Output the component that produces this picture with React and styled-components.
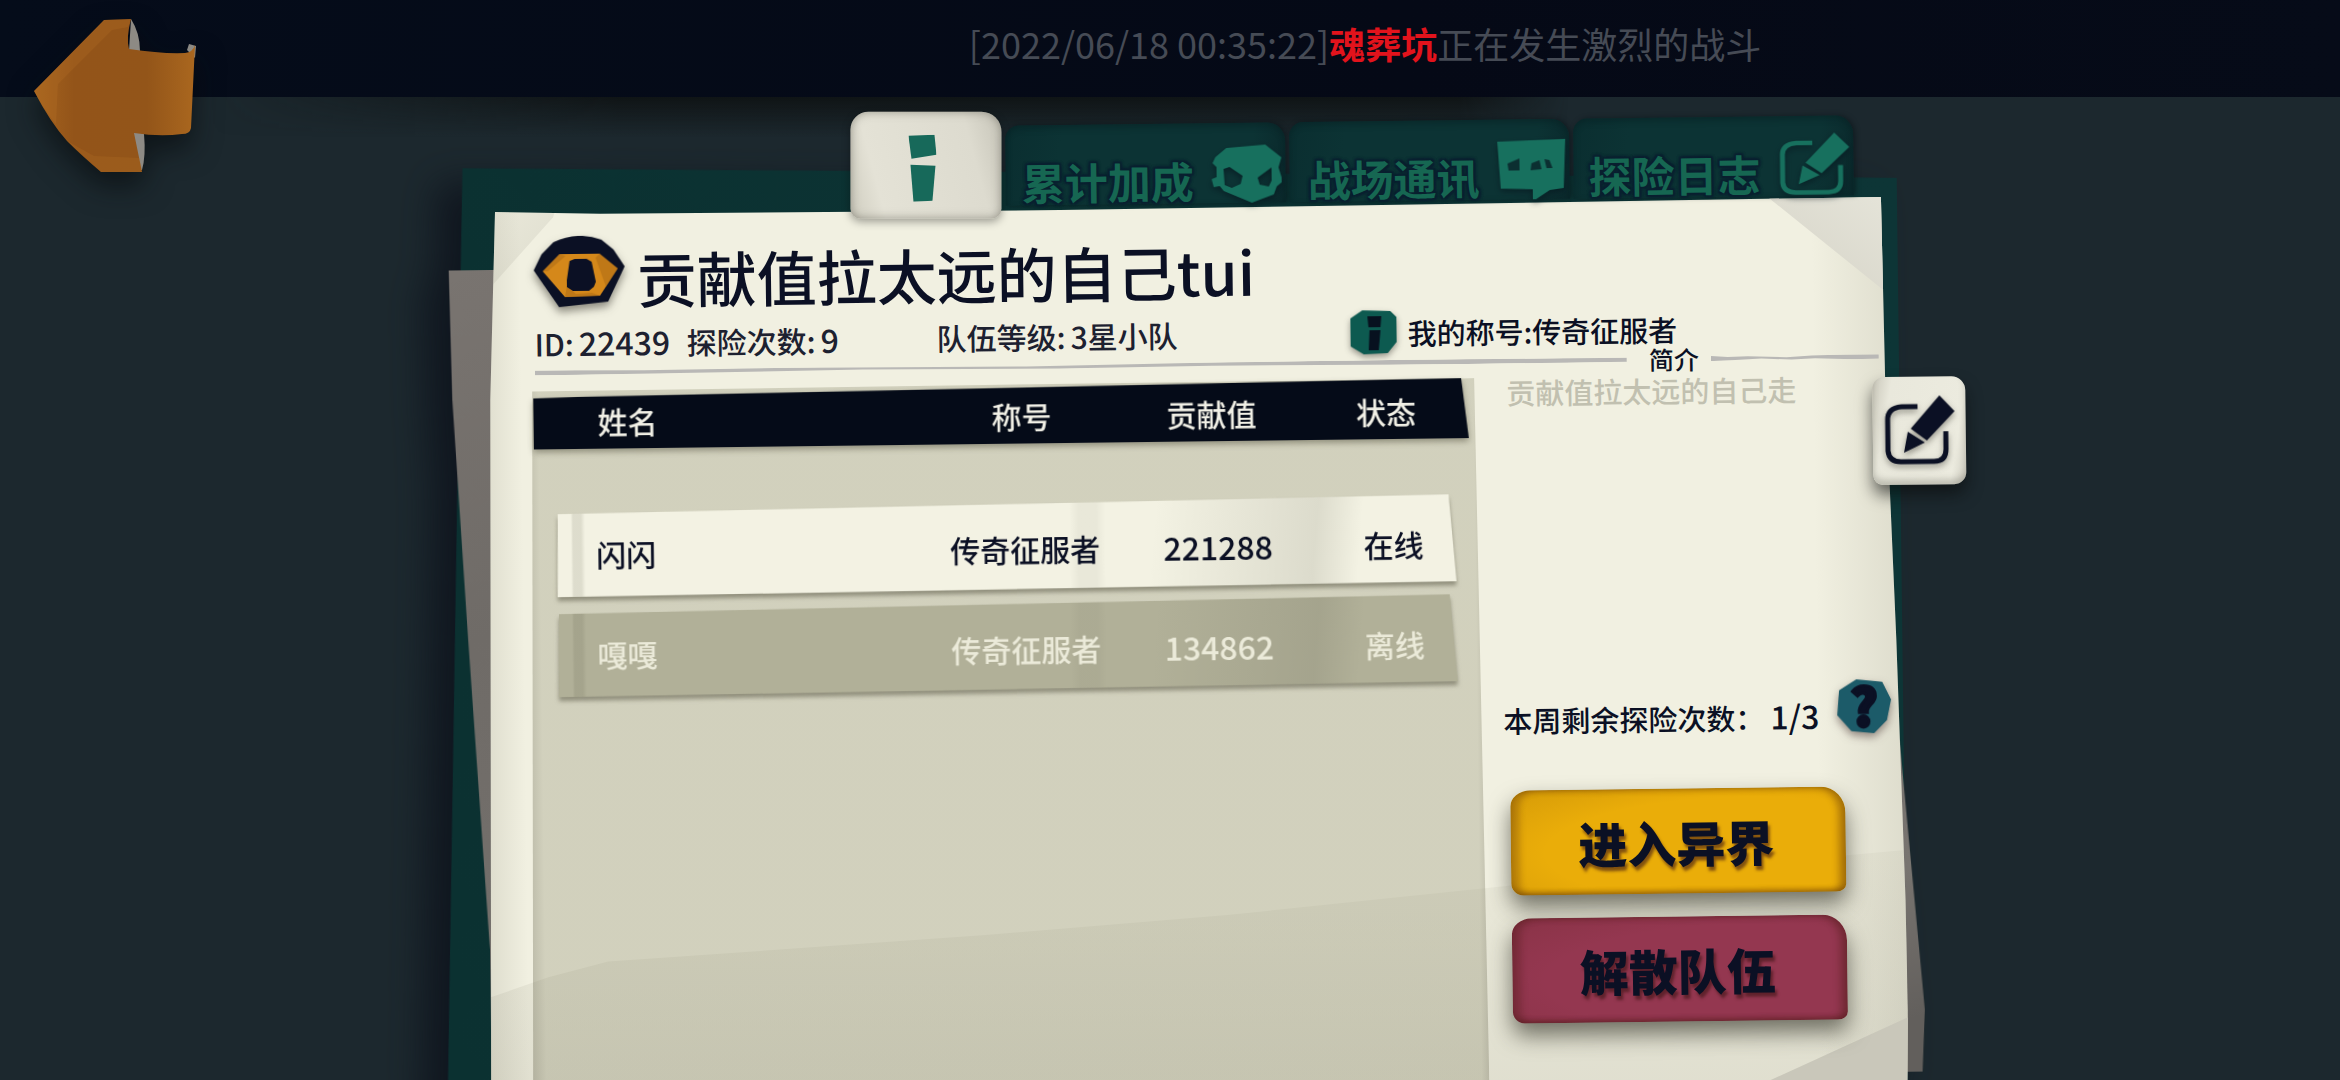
import React from "react";
import styled, { createGlobalStyle, css } from "styled-components";

const INK = "#0b1024";
const PAPER = "#f1f0e1";
const TEAL = "#0c3334";
const MINT = "#17705e";

const GlobalStyle = createGlobalStyle`
  *, *::before, *::after { box-sizing: border-box; }
  body {
    margin: 0;
    background: #1c282e;
    color: ${INK};
    font-family: "Noto Sans CJK SC", "Noto Sans", sans-serif;
    font-weight: 500;
  }
  button {
    font: inherit;
    color: inherit;
    border: 0;
    padding: 0;
    background: none;
    cursor: pointer;
  }
`;

const Screen = styled.div`
  height: 100vh;
  overflow: hidden;
  display: flex;
  flex-direction: column;
  background: #1c282e;
`;

const TopBar = styled.header`
  position: relative;
  flex: none;
  display: flex;
  align-items: center;
  height: 97px;
  background: linear-gradient(90deg, #050c1a, #050916 60%, #060b18);
  &::after {
    content: "";
    position: absolute;
    top: 100%;
    left: 9%;
    right: 33%;
    height: 40px;
    background: linear-gradient(rgba(12, 14, 14, 0.75), rgba(12, 14, 14, 0));
    mask-image: linear-gradient(90deg, transparent, #000 30%, #000 92%, transparent);
  }
`;

const BackButton = styled.button`
  position: absolute;
  z-index: 2;
  top: 18px;
  left: 34px;
  width: 163px;
  height: 155px;
  filter: drop-shadow(0 14px 14px rgba(5, 8, 10, 0.6));
  svg { display: block; }
`;

const Ticker = styled.p`
  flex: 1;
  margin: 0;
  padding: 0 0 12px 390px;
  text-align: center;
  font-size: 36px;
  font-weight: 400;
  line-height: 48px;
  color: #464b55;
  white-space: nowrap;
`;

const Place = styled.strong`
  font-weight: 700;
  color: #e2131c;
`;

const Stage = styled.main`
  flex: 1;
  display: flex;
  padding: 20px 463px 0 491px;
`;

const Board = styled.div`
  flex: 1;
  min-width: 0;
  display: flex;
  flex-direction: column;
  transform: rotate(-0.7deg);
  transform-origin: 0 95px;
`;

const TabBar = styled.nav`
  position: relative;
  z-index: 2;
  flex: none;
  display: flex;
  align-items: flex-end;
  gap: 4px;
  height: 95px;
  padding-left: 360px;
`;

const InfoTab = styled.button`
  display: grid;
  place-items: center;
  width: 151px;
  height: 107px;
  margin-bottom: -12px;
  padding: 6px 8px 0 0;
  border-radius: 18px 20px 10px 10px;
  background: linear-gradient(75deg, #d3d1c4 4%, #e4e2d6 20%, #dddbcf 78%, #c6c4b8);
  box-shadow: inset 0 0 10px rgba(90, 88, 78, 0.55), 0 3px 8px rgba(0, 0, 0, 0.35);
  transform: rotate(0.7deg);
`;

const Tab = styled.button`
  display: flex;
  justify-content: flex-end;
  align-items: flex-end;
  gap: 18px;
  width: 280px;
  height: 80px;
  padding-right: 4px;
  border-radius: 14px 18px 0 0;
  background: linear-gradient(100deg, #0a2e30, ${TEAL} 20%, ${TEAL} 85%, #0a282b);
  box-shadow: inset 0 3px 6px rgba(6, 26, 28, 0.4), 2px 0 5px rgba(5, 16, 20, 0.5);
  color: #166752;
  font-size: 43px;
  font-weight: 700;
  line-height: 48px;
  text-shadow: 0 0 4px #0a2030, 2px 2px 2px #0a2030, -2px -2px 2px #0a2030, 2px -2px 2px #0a2030, -2px 2px 2px #0a2030;
  white-space: nowrap;
  svg { flex: none; filter: drop-shadow(0 3px 3px rgba(5, 20, 28, 0.6)); }
`;

const Sheet = styled.section`
  position: relative;
  flex: 1 0 920px;
  isolation: isolate;
`;

const Backing = styled.div`
  position: absolute;
  inset: 0;
  z-index: -1;
  filter: drop-shadow(-26px 14px 18px rgba(10, 14, 24, 0.7));
  &::before {
    content: "";
    position: absolute;
    inset: -44px -20px 0 -60px;
    background: linear-gradient(90deg, #0b3131, #0d3536);
    clip-path: polygon(32px 0, 100% 27px, 100% 100%, 5px 100%, 29px 102px);
  }
  &::after {
    content: "";
    position: absolute;
    inset: 58px -40px 0 -44px;
    background: linear-gradient(165deg, #797470, #6f6b67 30%, #787470 80%, #625f5c 92%);
    clip-path: polygon(1px 0, 60px 0, calc(100% - 24px) 487px, calc(100% - 2px) 757px, calc(100% - 5px) 819px, 34px 819px, 34px 680px, 16px 370px, 3px 129px);
  }
`;

const Paper = styled.div`
  position: absolute;
  inset: 0 -24px 0 -12px;
  z-index: -1;
  background:
    linear-gradient(90deg, rgba(150, 148, 130, 0.22), transparent 40px),
    linear-gradient(90deg, transparent calc(100% - 90px), rgba(150, 148, 130, 0.22)),
    ${PAPER};
  clip-path: polygon(16px 0, 121px 3px, 581px 5px, calc(100% - 20px) 2px, calc(100% - 18px) 185px, calc(100% - 10px) 445px, calc(100% - 4px) 705px, calc(100% - 3px) 815px, calc(100% - 5px) 100%, 1px 100%, 9px 188px);
`;

const Crease = styled.div`
  position: absolute;
  inset: 0;
  ${({ $place }) =>
    ({
      topLeft: css`
        background: linear-gradient(135deg, rgba(180, 178, 165, 0.1), rgba(150, 148, 135, 0.2) 90px);
        clip-path: polygon(0 0, 76px 0, 74px 6px, 10px 76px, 0 86px);
      `,
      topRight: css`
        background: linear-gradient(215deg, #e6e5da, #d5d3c7 150px);
        clip-path: polygon(calc(100% - 134px) 0, 100% 0, 100% 96px, calc(100% - 20px) 94px);
      `,
      middle: css`
        background: linear-gradient(rgba(110, 108, 80, 0.05) 660px, rgba(110, 108, 90, 0.14));
        clip-path: polygon(0 786px, 60px 766px, 120px 751px, 35% 729px, 52% 712px, 72% 686px, 100% 655px, 100% 100%, 0 100%);
      `,
      bottomRight: css`
        background: #c9c7ba;
        clip-path: polygon(calc(100% - 2px) 822px, 100% 100%, calc(100% - 200px) 100%, calc(100% - 142px) 884px);
      `,
    })[$place]}
`;

const TitleRow = styled.div`
  display: flex;
  align-items: flex-start;
  gap: 12px;
  padding: 25px 0 0 42px;
  > svg { flex: none; filter: drop-shadow(0 5px 4px rgba(40, 38, 30, 0.5)); }
`;

const TeamName = styled.h1`
  margin: 0;
  font-size: 60px;
  font-weight: 500;
  line-height: 84px;
  white-space: nowrap;
`;

const Facts = styled.div`
  display: grid;
  grid-template-columns: 152px 250px 414px auto;
  align-items: center;
  height: 36px;
  padding-left: 42px;
  font-size: 30px;
  line-height: 36px;
  white-space: nowrap;
`;

const Fact = styled.span`
  display: flex;
  align-items: baseline;
  gap: 5px;
  color: #1d2130;
`;

const Num = styled.span`
  font-size: 32px;
`;

const MyTitle = styled.span`
  display: flex;
  align-items: center;
  gap: 11px;
  font-size: 29px;
  svg { flex: none; filter: drop-shadow(0 3px 3px rgba(40, 38, 30, 0.45)); }
`;

const Divider = styled.div`
  display: flex;
  align-items: center;
  height: 33px;
  padding-left: 42px;
`;

const Rule = styled.span`
  flex: ${({ $short }) => ($short ? "0 0 168px" : "1")};
  height: 5px;
  background: #b9b8b6;
  clip-path: polygon(0 0, 10% 20%, 22% 10%, 45% 40%, 60% 10%, 80% 0, 100% 10%, 100% 90%, 85% 100%, 62% 70%, 48% 90%, 30% 60%, 12% 90%, 0 100%);
`;

const DividerLabel = styled.span`
  padding: 0 12px 0 22px;
  font-size: 25px;
  line-height: 25px;
`;

const Body = styled.div`
  display: flex;
  height: calc(100% - 178px);
  padding-left: 31px;
`;

const Roster = styled.div`
  position: relative;
  flex: 1;
  min-width: 0;
  &::before {
    content: "";
    position: absolute;
    inset: 0;
    background: linear-gradient(90deg, rgba(110, 108, 85, 0.4), rgba(137, 136, 106, 0.3) 14px, rgba(137, 136, 106, 0.3) calc(100% - 8px), rgba(110, 108, 85, 0.36));
    clip-path: polygon(8px 2px, calc(100% - 7px) 0, 100% 100%, 0 100%);
  }
`;

const Table = styled.table`
  position: relative;
  display: block;
  padding: 0 13px 0 9px;
  font-size: 30px;
  line-height: 36px;
  white-space: nowrap;
`;

const rowGrid = css`
  position: relative;
  display: grid;
  grid-template-columns: 1fr 160px 226px 125px;
  align-items: center;
  isolation: isolate;
  &::before {
    content: "";
    position: absolute;
    inset: 0;
    z-index: -1;
  }
`;

const Head = styled.thead`
  display: block;
`;

const HeadRow = styled.tr`
  ${rowGrid}
  grid-template-columns: 1fr 160px 220px 129px;
  height: 60px;
  padding: 4px 18px 0 64px;
  color: #f1f0e6;
  filter: drop-shadow(0 3px 3px rgba(60, 58, 40, 0.45));
  &::before {
    background: #050b18;
    clip-path: polygon(0 9px, 45px 8px, calc(100% - 7px) 0, 100% 100%, 0 100%);
  }
`;

const Members = styled.tbody`
  display: grid;
  gap: 8px;
  padding: 56px 14px 0 22px;
`;

const MemberRow = styled.tr`
  ${rowGrid}
  height: 92px;
  padding: 6px 0 0 39px;
  color: ${({ $online }) => ($online ? INK : "#ebead9")};
  filter: drop-shadow(0 4px 2px rgba(80, 78, 60, 0.5));
  &::before {
    background:
      linear-gradient(90deg, transparent 14px, rgba(90, 90, 70, 0.14) 16px, rgba(90, 90, 70, 0.14) 24px, transparent 28px),
      linear-gradient(95deg, transparent 66%, rgba(100, 100, 85, 0.16) 84%, transparent 89%),
      linear-gradient(90deg, transparent 57%, rgba(100, 100, 85, 0.07) 58%, rgba(100, 100, 85, 0.07) 60%, transparent 61%),
      ${({ $online }) => ($online ? "#f3f2e3" : "#b1b098")};
    clip-path: polygon(1px 9px, calc(100% - 7px) 0, 100% calc(100% - 5px), 0 100%);
  }
`;

const Th = styled.th`
  padding: 0;
  font-weight: 500;
  text-align: ${({ $left }) => ($left ? "left" : "center")};
`;

const Td = styled.td`
  padding: 0;
  font-size: ${({ $num }) => ($num ? "32px" : "30px")};
  text-align: ${({ $left }) => ($left ? "left" : "center")};
`;

const Side = styled.aside`
  flex: 0 0 398px;
  padding-left: 18px;
`;

const Intro = styled.p`
  margin: 0;
  height: 306px;
  padding-left: 7px;
  font-size: 29px;
  line-height: 28px;
  color: #c1c0b0;
`;

const Quota = styled.div`
  display: flex;
  justify-content: space-between;
  align-items: flex-end;
  height: 54px;
  margin-right: -8px;
`;

const QuotaText = styled.p`
  display: flex;
  align-items: baseline;
  gap: 6px;
  margin: 0;
  font-size: 29px;
  line-height: 36px;
  white-space: nowrap;
`;

const HelpButton = styled.button`
  width: 54px;
  height: 54px;
  filter: drop-shadow(0 4px 4px rgba(60, 40, 40, 0.5));
  span {
    display: block;
    height: 54px;
    background: #1c5b69;
    clip-path: polygon(4% 20%, 36% 0, 84% 5%, 100% 38%, 92% 76%, 68% 100%, 26% 96%, 0 66%);
    font-size: 52px;
    font-weight: 900;
    line-height: 50px;
    text-align: center;
    -webkit-text-stroke: 3px ${INK};
  }
`;

const Actions = styled.div`
  display: grid;
  gap: 23px;
  padding: 53px 39px 0 6px;
`;

const ActionButton = styled.button`
  height: 105px;
  padding-right: 4px;
  border-radius: 20px 24px 10px 12px / 16px 26px 8px 12px;
  background:
    radial-gradient(ellipse at 70% 60%, transparent 60%, rgba(60, 20, 0, 0.12)),
    ${({ $tone }) => ($tone === "gold" ? "#eaad09" : "#943750")};
  box-shadow:
    inset 9px 0 6px rgba(60, 20, 10, 0.25),
    inset -7px 0 7px rgba(60, 20, 10, 0.35),
    inset 0 -3px 5px rgba(60, 20, 10, 0.2),
    0 12px 22px rgba(50, 50, 40, 0.65);
  font-size: 49px;
  font-weight: 900;
  line-height: 60px;
  text-shadow: 2px 4px 3px rgba(60, 20, 20, 0.6);
`;

const EditButton = styled.button`
  position: absolute;
  top: 182px;
  right: -86px;
  display: grid;
  place-items: center;
  width: 93px;
  height: 108px;
  border-radius: 12px 14px 12px 10px;
  background: linear-gradient(100deg, #c9c7ba, #e9e8dc 18%, #ecebdf 85%, #cfcdc1);
  box-shadow: inset 0 -5px 6px rgba(90, 88, 78, 0.3), 0 10px 16px rgba(10, 12, 12, 0.6);
  svg { filter: drop-shadow(0 3px 3px rgba(60, 58, 50, 0.5)); }
`;

const BackIcon = () => (
  <svg width="163" height="155" viewBox="0 0 163 155" aria-hidden="true">
    <defs>
      <linearGradient id="arrow" x1="0" x2="1">
        <stop offset="0" stopColor="#a5631e" />
        <stop offset="0.25" stopColor="#935419" />
        <stop offset="0.7" stopColor="#935519" />
        <stop offset="1" stopColor="#aa671f" />
      </linearGradient>
    </defs>
    <path d="M97 1q9 14 9 32H95zM99 112l11 4q2 22-2 36H98zM153 32l2-6 7 2-1 12z" fill="#8d8a84" />
    <path d="M0 73 70 2 97 1Q92 20 95 31 128 36 151 35 159 34 161 27L157 110Q156 116 148 116 126 119 100 115L108 154H67Q48 138 33 123 16 104 0 73z" fill="url(#arrow)" />
    <path d="M0 73 70 2 97 1 94 9 78 12 24 66 22 106Q9 90 0 73z" fill="#c07828" opacity=".22" />
    <path d="M67 154 33 123 60 138 106 140 108 154z" fill="#c07828" opacity=".2" />
  </svg>
);

const InfoMark = () => (
  <svg width="28" height="67" viewBox="0 0 28 67" fill="#17695a" aria-hidden="true">
    <polygon points="0,1 26,0 28,20 3,24" />
    <polygon points="2,30 27,31 24,66 5,67" />
  </svg>
);

const MaskIcon = () => (
  <svg width="70" height="58" viewBox="0 0 70 58" aria-hidden="true">
    <path fill={MINT} fillRule="evenodd" d="M1 18 4 12 15 3 54 0 70 13 67 23 70 33 70 38 65 42 62 50 40 58 12 46 8 41 2 42 0 34 5 32 5 22zM12 24 18 22 31 31 29 39 20 43 13 40zM60 23 46 33 48 40 57 42 60 36z" />
  </svg>
);

const ChatIcon = () => (
  <svg width="68" height="60" viewBox="0 0 68 60" aria-hidden="true">
    <path fill={MINT} d="M0 2 68 0 66 49 52 51 35 62 35 50 3 49z" />
    <path fill="#0b2f31" d="M10 24 22 19 22 31 11 31zM34 24 42 21 44 30 33 31zM47 20 52 21 55 29 49 29z" />
  </svg>
);

const EditIcon = ({ color, height = 70 }) => (
  <svg width="71" height={height} viewBox="0 0 71 70" preserveAspectRatio="none" aria-hidden="true">
    <path d="M34 11H18Q4 12 4 24V55Q5 66 17 66H50Q62 66 62 54V36" fill="none" stroke={color} strokeWidth="5" strokeLinejoin="round" />
    <path d="M56 0 71 16 43 45 27 33zM24 36 41 47 20 57z" fill={color} />
  </svg>
);

const TeamBadge = () => (
  <svg width="91" height="71" viewBox="0 0 91 71" aria-hidden="true">
    <path fill={INK} d="M20 6Q45-5 68 4L80 14 91 31 74 66 25 71 0 34 8 18z" />
    <path fill="#d5881a" d="M9 35 26 18H66L84 33 66 60 31 61z" />
    <path fill="#a96813" d="M66 18 84 33 72 51 62 22zM9 35 26 18 32 20 14 35zM33 50 42 58 58 57 66 60 31 61z" opacity=".5" />
    <path fill={INK} d="M36 25 41 23H53L58 26 62 46 60 51 55 55H39L33 51V44z" />
  </svg>
);

const TitleIcon = () => (
  <svg width="46" height="44" viewBox="0 0 46 44" aria-hidden="true">
    <path fill="#0d5a50" d="M12 0 40 1 46 7V32L37 43 13 44 0 36V8z" />
    <path fill="#07111f" d="M17 6H31L30 17H18zM19 20H30L28 40H18z" />
  </svg>
);

const tabs = [
  { label: "累计加成", icon: <MaskIcon /> },
  { label: "战场通讯", icon: <ChatIcon /> },
  { label: "探险日志", icon: <EditIcon color={MINT} height={63} /> },
];

const members = [
  { name: "闪闪", title: "传奇征服者", score: 221288, online: true },
  { name: "嘎嘎", title: "传奇征服者", score: 134862, online: false },
];

export default function App() {
  return (
    <Screen>
      <GlobalStyle />
      <TopBar>
        <BackButton aria-label="返回"><BackIcon /></BackButton>
        <Ticker>[2022/06/18 00:35:22]<Place>魂葬坑</Place>正在发生激烈的战斗</Ticker>
      </TopBar>
      <Stage>
        <Board>
          <TabBar>
            <InfoTab aria-label="队伍信息" aria-current="page"><InfoMark /></InfoTab>
            {tabs.map((tab) => (
              <Tab key={tab.label}>{tab.label}{tab.icon}</Tab>
            ))}
          </TabBar>
          <Sheet>
            <Backing />
            <Paper>
              <Crease $place="topLeft" />
              <Crease $place="topRight" />
              <Crease $place="middle" />
              <Crease $place="bottomRight" />
            </Paper>
            <TitleRow>
              <TeamBadge />
              <TeamName>贡献值拉太远的自己tui</TeamName>
            </TitleRow>
            <Facts>
              <Fact>ID:<Num>22439</Num></Fact>
              <Fact>探险次数:<Num>9</Num></Fact>
              <Fact>队伍等级:<span>3星小队</span></Fact>
              <MyTitle><TitleIcon />我的称号:传奇征服者</MyTitle>
            </Facts>
            <Divider>
              <Rule />
              <DividerLabel>简介</DividerLabel>
              <Rule $short />
            </Divider>
            <Body>
              <Roster>
                <Table>
                  <Head>
                    <HeadRow>
                      <Th $left>姓名</Th>
                      <Th>称号</Th>
                      <Th>贡献值</Th>
                      <Th>状态</Th>
                    </HeadRow>
                  </Head>
                  <Members>
                    {members.map((m) => (
                      <MemberRow key={m.name} $online={m.online}>
                        <Td $left>{m.name}</Td>
                        <Td>{m.title}</Td>
                        <Td $num>{m.score}</Td>
                        <Td>{m.online ? "在线" : "离线"}</Td>
                      </MemberRow>
                    ))}
                  </Members>
                </Table>
              </Roster>
              <Side>
                <Intro>贡献值拉太远的自己走</Intro>
                <Quota>
                  <QuotaText>本周剩余探险次数：<Num>1/3</Num></QuotaText>
                  <HelpButton aria-label="帮助"><span>?</span></HelpButton>
                </Quota>
                <Actions>
                  <ActionButton $tone="gold">进入异界</ActionButton>
                  <ActionButton $tone="wine">解散队伍</ActionButton>
                </Actions>
              </Side>
            </Body>
            <EditButton aria-label="编辑简介"><EditIcon color={INK} /></EditButton>
          </Sheet>
        </Board>
      </Stage>
    </Screen>
  );
}
